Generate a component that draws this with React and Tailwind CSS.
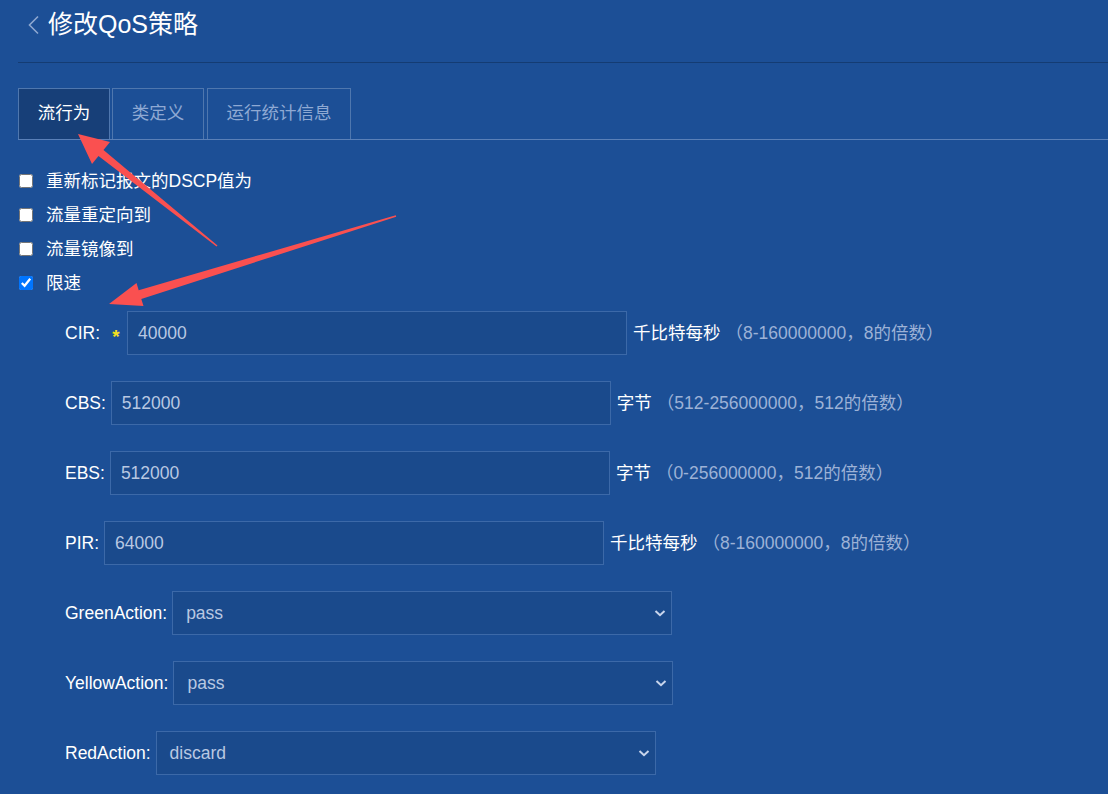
import React from "react";

const latin = { fontFamily: '"Liberation Sans", "Noto Sans CJK SC", Arial, sans-serif' };

function Field({ label, star, value, unit, hint }) {
  return (
    <div className="flex items-center h-[44px]">
      <span className="text-white text-[17.5px] mr-[5px]">{label}</span>
      {star && (
        <span className="w-[22px] flex justify-center text-[#f5e020] text-[19px] font-bold leading-none pt-[7px]">*</span>
      )}
      <div className="w-[500px] h-[44px] bg-[#1a4a8c] border border-[#3c69a8] flex items-center pl-[10px] text-[#b9c8e2] text-[17.5px]">
        {value}
      </div>
      <span className="ml-[6px] text-white text-[17.5px]">{unit}</span>
      <span className="ml-[5px] text-[#9db2d6] text-[17.5px]">{hint}</span>
    </div>
  );
}

function SelectField({ label, value }) {
  return (
    <div className="flex items-center h-[44px]">
      <span className="text-white text-[17.5px] mr-[5px]">{label}</span>
      <div className="relative w-[500px] h-[44px] bg-[#1a4a8c] border border-[#3c69a8] flex items-center pl-[13px] text-[#b9c8e2] text-[17.5px]">
        {value}
        <svg className="absolute right-[5px] top-[16px]" width="12" height="10" viewBox="0 0 12 10">
          <path d="M1.5 3 L6 7.2 L10.5 3" fill="none" stroke="#c8d5ec" strokeWidth="2" />
        </svg>
      </div>
    </div>
  );
}

function Check({ checked, label }) {
  return (
    <label className="flex items-center h-[34px]">
      <input type="checkbox" defaultChecked={checked} className="w-[14px] h-[14px] m-0 ml-[19px]" />
      <span className="ml-[13px] text-white text-[17.5px]">{label}</span>
    </label>
  );
}

export default function App() {
  return (
    <div className="relative w-[1108px] h-[794px] overflow-hidden bg-[#1c4f96]" style={latin}>
      {/* title */}
      <div className="h-[62px] flex items-center pb-[13px]">
        <svg className="ml-[27px]" width="13" height="20" viewBox="0 0 13 20">
          <path d="M11 1.5 L2.5 10 L11 18.5" fill="none" stroke="#8ea8d0" strokeWidth="1.6" />
        </svg>
        <span className="ml-[8px] text-white text-[25px]">修改QoS策略</span>
      </div>
      <div className="ml-[18px] h-[1px] bg-[#143c73]" />

      {/* tabs */}
      <div className="mt-[25px] ml-[18px] flex items-end border-b border-[#5a80b8] h-[52px]">
        <div className="w-[92px] h-[51px] flex items-center justify-center pb-[2px] bg-[#173f78] border border-b-0 border-[#4f77ae] text-white text-[17.5px]">
          流行为
        </div>
        <div className="ml-[2px] w-[92px] h-[51px] flex items-center justify-center pb-[2px] border border-b-0 border-[#4f77ae] text-[#8fa9d3] text-[17.5px]">
          类定义
        </div>
        <div className="ml-[3px] w-[144px] h-[51px] flex items-center justify-center pb-[2px] border border-b-0 border-[#4f77ae] text-[#8fa9d3] text-[17.5px]">
          运行统计信息
        </div>
      </div>

      {/* checkboxes */}
      <div className="mt-[24px] flex flex-col">
        <Check label="重新标记报文的DSCP值为" />
        <Check label="流量重定向到" />
        <Check label="流量镜像到" />
        <Check checked label="限速" />
      </div>

      {/* fields */}
      <div className="mt-[11px] ml-[65px] flex flex-col gap-[26px]">
        <Field label="CIR:" star value="40000" unit="千比特每秒" hint="（8-160000000，8的倍数）" />
        <Field label="CBS:" value="512000" unit="字节" hint="（512-256000000，512的倍数）" />
        <Field label="EBS:" value="512000" unit="字节" hint="（0-256000000，512的倍数）" />
        <Field label="PIR:" value="64000" unit="千比特每秒" hint="（8-160000000，8的倍数）" />
        <SelectField label="GreenAction:" value="pass" />
        <SelectField label="YellowAction:" value="pass" />
        <SelectField label="RedAction:" value="discard" />
      </div>

      {/* annotation arrows */}
      <svg className="absolute left-0 top-0 pointer-events-none" width="1108" height="794" viewBox="0 0 1108 794">
        <polygon
          fill="#fa5050"
          points="78,134 110,142 103.5,149.9 217.5,245.4 216.5,246.6 98.5,156.1 92,164"
        />
        <polygon
          fill="#fa5050"
          points="109,304 136.5,283.1 138.7,290.3 395.8,215.2 396.2,216.8 141.3,298.9 143.5,306.1"
        />
      </svg>
    </div>
  );
}
